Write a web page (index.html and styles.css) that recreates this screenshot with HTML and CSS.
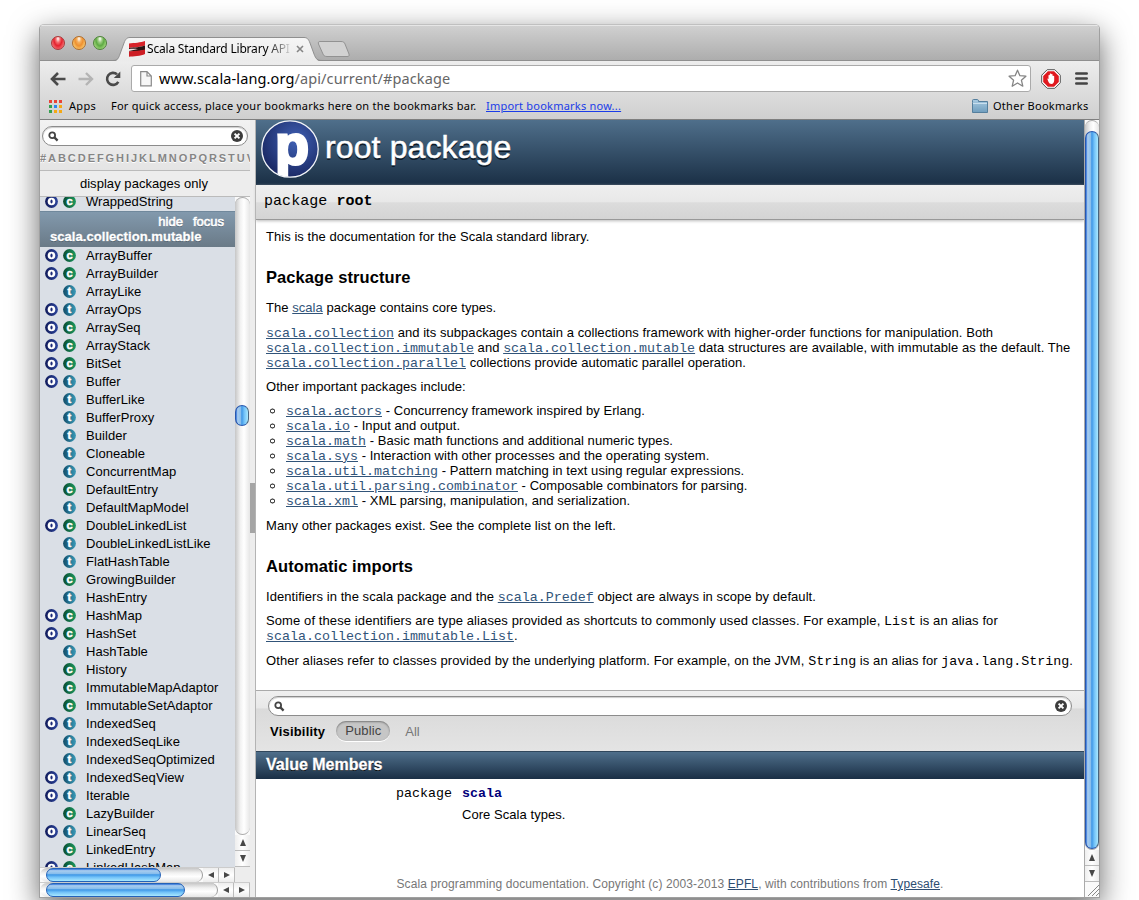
FILE: index.html
```html
<!DOCTYPE html>
<html lang="en">
<head>
<meta charset="utf-8">
<title>Scala Standard Library API</title>
<link rel="stylesheet" href="styles.css">
</head>
<body>
<svg class="defs" width="0" height="0">
  <defs>
    <linearGradient id="gBlue" x1="0" x2="1"><stop offset="0" stop-color="#101a5a"/><stop offset="1" stop-color="#2c459c"/></linearGradient>
    <linearGradient id="gGreen" x1="0" x2="1"><stop offset="0" stop-color="#0a4a30"/><stop offset="1" stop-color="#1c9a60"/></linearGradient>
    <linearGradient id="gTeal" x1="0" x2="1"><stop offset="0" stop-color="#124c68"/><stop offset="1" stop-color="#3a9ab8"/></linearGradient>
    <linearGradient id="gTab" x1="0" x2="0" y1="0" y2="1"><stop offset="0" stop-color="#f6f6f6"/><stop offset="1" stop-color="#ebebeb"/></linearGradient>
    <linearGradient id="gFolder" x1="0" x2="0" y1="0" y2="1"><stop offset="0" stop-color="#a9cbe2"/><stop offset="1" stop-color="#6f9dbd"/></linearGradient>
    <symbol id="o" viewBox="0 0 13 13"><circle cx="6.5" cy="6.5" r="6.4" fill="url(#gBlue)"/><circle cx="6.5" cy="6.5" r="3.8" fill="#fff"/><ellipse cx="6.5" cy="6.5" rx="1.1" ry="1.9" fill="#1c2a78"/></symbol>
    <symbol id="c" viewBox="0 0 13 13"><circle cx="6.5" cy="6.5" r="6.4" fill="url(#gGreen)"/><text x="6.6" y="9.800" class="glyph glyph-c">c</text></symbol>
    <symbol id="t" viewBox="0 0 13 13"><circle cx="6.5" cy="6.5" r="6.4" fill="url(#gTeal)"/><text x="6.4" y="10.2" class="glyph glyph-t">t</text></symbol>
    <symbol id="lens" viewBox="0 0 11 11"><circle cx="4.2" cy="4.2" r="2.9" fill="none" stroke="#444" stroke-width="1.8"/><path d="M6.4 6.4 9.6 9.6" stroke="#444" stroke-width="2.3"/></symbol>
    <symbol id="clear" viewBox="0 0 12 12"><circle cx="6" cy="6" r="6" fill="#3d3d3d"/><path d="M3.6 3.6 8.4 8.4M8.4 3.6 3.6 8.4" stroke="#fff" stroke-width="2"/></symbol>
  </defs>
</svg>
<div class="window">
  <div class="titlebar">
    <div class="lights"><i class="light red"></i><i class="light amber"></i><i class="light green"></i></div>
    <div class="tab">
      <svg class="tab-shape" width="210" height="25" viewBox="0 0 210 25"><path d="M0 24.5C5 24 5.500 21 7 17L11 6C12.500 2 14 .5 17 .5H191C194 .5 195.500 2 197 6L201 17C203 22 204 24 208 24.500Z" fill="url(#gTab)"/><path d="M0 23.500C5 23.500 5.500 21 7 17L11 6C12.500 2 14 .5 17 .5H191C194 .5 195.500 2 197 6L201 17C203 22 204 23.500 210 23.500" fill="none" stroke="#8f8f8f"/></svg>
      <svg class="favicon" width="16" height="16" viewBox="0 0 16 16"><path d="M0 2.500C5 2 12 1.500 16 0V4.500C12 6 4 6.500 0 7Z" fill="#d8232a"/><path d="M0 7C5 6.500 12 6 16 4.500V9C12 10 4 10.500 0 10.500Z" fill="#2b1514"/><path d="M0 10.500C5 10 12 9.500 16 8.500V13C12 15 4 15.300 0 15.800Z" fill="#cc1d24"/><path d="M0 8C3 7.600 7 7.800 9 8L0 10Z" fill="#f4e0e0"/></svg>
      <span class="tab-title">Scala Standard Library API</span>
      <svg class="tab-close" width="8" height="8" viewBox="0 0 8 8"><path d="M1 1 7 7M7 1 1 7" stroke="#858585" stroke-width="1.6"/></svg>
    </div>
    <svg class="newtab" width="34" height="17" viewBox="0 0 34 17"><path d="M3 .5H24C26.500 .5 27.500 1.500 28 3L32 13C32.500 15 32 15.500 30 15.500H10C7.500 15.500 6.500 14.500 6 13L1.500 3C1 1.200 1.500 .5 3 .5Z" fill="#d2d2d2" stroke="#929292"/></svg>
  </div>
  <div class="chrome">
    <div class="toolbar">
      <svg class="nav" width="16" height="14" viewBox="0 0 16 14"><path d="M8 1 2 7 8 13M2 7H15.500" fill="none" stroke="#4a4a4a" stroke-width="2.600"/></svg>
      <svg class="nav fwd" width="16" height="14" viewBox="0 0 16 14"><path d="M8 1 14 7 8 13M14 7H.5" fill="none" stroke="#b4b4b4" stroke-width="2.400"/></svg>
      <svg class="nav reload" width="16" height="16" viewBox="0 0 16 16"><path d="M12 3.300A6 6 0 1 0 13.300 10.800" fill="none" stroke="#4a4a4a" stroke-width="2.600"/><path d="M15.300 .5V7H8.800Z" fill="#4a4a4a"/></svg>
      <div class="omnibox">
        <svg width="12" height="16" viewBox="0 0 12 16"><path d="M.7 .7H7L11.300 5V14.800H.7ZM7 .7V5H11.300" fill="#f7f7f7" stroke="#8a8a8a" stroke-width="1.200"/></svg>
        <span class="url"><b>www.scala-lang.org</b>/api/current/#package</span>
        <svg width="19" height="19" viewBox="0 0 19 19"><path d="M9.500 1.200 11.900 6.700 17.900 7.200 13.400 11.200 14.800 17.200 9.500 14 4.200 17.200 5.600 11.200 1.100 7.200 7.100 6.700Z" fill="#fff" stroke="#858585" stroke-width="1.300" stroke-linejoin="round"/></svg>
      </div>
      <svg class="block" width="20" height="20" viewBox="0 0 20 20"><path d="M6.200 .7H13.800L19.300 6.200V13.800L13.800 19.300H6.200L.7 13.800V6.200Z" fill="#fff" stroke="#555"/><path d="M6.900 2.200H13.100L17.800 6.900V13.100L13.100 17.800H6.900L2.200 13.100V6.900Z" fill="#e0191f"/><path d="M6.200 9.500 7.500 10V6.300Q8.200 5.500 8.800 6.300V4.800Q9.600 4 10.200 4.800V5.300Q11.100 4.700 11.600 5.600V7Q12.500 6.200 13.200 7.200V11.500Q12.800 14.800 10.500 15Q8.200 14.800 7.500 13Z" fill="#fff"/></svg>
      <svg class="menu" width="13" height="13" viewBox="0 0 13 13"><path d="M1.300 1.500H11.700M1.300 6.500H11.700M1.300 11.500H11.700" stroke="#444" stroke-width="2.600" stroke-linecap="round"/></svg>
    </div>
    <div class="bookmarks">
      <svg class="apps" width="13" height="13" viewBox="0 0 13 13"><path d="M0 0h3v3H0zM5 0h3v3H5zM10 0h3v3h-3z" fill="#ea4335"/><path d="M0 5h3v3H0zM0 10h3v3H0z" fill="#34a04f"/><path d="M5 5h3v3H5z" fill="#2a86f0"/><path d="M10 5h3v3h-3zM5 10h3v3H5zM10 10h3v3h-3z" fill="#f4a814"/></svg>
      <span class="b-apps">Apps</span>
      <span class="b-hint">For quick access, place your bookmarks here on the bookmarks bar.</span>
      <a class="b-import">Import bookmarks now...</a>
      <svg class="folder" width="16" height="15" viewBox="0 0 16 15"><path d="M.5 3.500V1.500Q.5 .5 1.500 .5H5.500Q6.500 .5 6.500 2.500H15.500V13.500H.5Z" fill="url(#gFolder)" stroke="#557f9d"/><path d="M1 4.500H15" stroke="#c9dfee" /></svg>
      <span class="b-other">Other Bookmarks</span>
    </div>
  </div>
  <div class="page">
    <div class="side">
      <div class="side-filter">
        <div class="search"><svg width="11" height="11"><use href="#lens"/></svg><svg width="12" height="12"><use href="#clear"/></svg></div>
        <div class="letters">#ABCDEFGHIJKLMNOPQRSTUV</div>
      </div>
      <div class="only">display packages only</div>
      <div class="listrow">
        <div class="list">
          <div class="row first"><svg><use href="#o"/></svg><svg><use href="#c"/></svg>WrappedString</div>
          <div class="pkg"><div class="pkg-act"><span>hide</span><span>focus</span></div><div class="pkg-name">scala.collection.mutable</div></div>
          <div class="row"><svg><use href="#o"/></svg><svg><use href="#c"/></svg>ArrayBuffer</div>
          <div class="row"><svg><use href="#o"/></svg><svg><use href="#c"/></svg>ArrayBuilder</div>
          <div class="row"><svg></svg><svg><use href="#t"/></svg>ArrayLike</div>
          <div class="row"><svg><use href="#o"/></svg><svg><use href="#t"/></svg>ArrayOps</div>
          <div class="row"><svg><use href="#o"/></svg><svg><use href="#c"/></svg>ArraySeq</div>
          <div class="row"><svg><use href="#o"/></svg><svg><use href="#c"/></svg>ArrayStack</div>
          <div class="row"><svg><use href="#o"/></svg><svg><use href="#c"/></svg>BitSet</div>
          <div class="row"><svg><use href="#o"/></svg><svg><use href="#t"/></svg>Buffer</div>
          <div class="row"><svg></svg><svg><use href="#t"/></svg>BufferLike</div>
          <div class="row"><svg></svg><svg><use href="#t"/></svg>BufferProxy</div>
          <div class="row"><svg></svg><svg><use href="#t"/></svg>Builder</div>
          <div class="row"><svg></svg><svg><use href="#t"/></svg>Cloneable</div>
          <div class="row"><svg></svg><svg><use href="#t"/></svg>ConcurrentMap</div>
          <div class="row"><svg></svg><svg><use href="#c"/></svg>DefaultEntry</div>
          <div class="row"><svg></svg><svg><use href="#t"/></svg>DefaultMapModel</div>
          <div class="row"><svg><use href="#o"/></svg><svg><use href="#c"/></svg>DoubleLinkedList</div>
          <div class="row"><svg></svg><svg><use href="#t"/></svg>DoubleLinkedListLike</div>
          <div class="row"><svg></svg><svg><use href="#t"/></svg>FlatHashTable</div>
          <div class="row"><svg></svg><svg><use href="#c"/></svg>GrowingBuilder</div>
          <div class="row"><svg></svg><svg><use href="#t"/></svg>HashEntry</div>
          <div class="row"><svg><use href="#o"/></svg><svg><use href="#c"/></svg>HashMap</div>
          <div class="row"><svg><use href="#o"/></svg><svg><use href="#c"/></svg>HashSet</div>
          <div class="row"><svg></svg><svg><use href="#t"/></svg>HashTable</div>
          <div class="row"><svg></svg><svg><use href="#c"/></svg>History</div>
          <div class="row"><svg></svg><svg><use href="#c"/></svg>ImmutableMapAdaptor</div>
          <div class="row"><svg></svg><svg><use href="#c"/></svg>ImmutableSetAdaptor</div>
          <div class="row"><svg><use href="#o"/></svg><svg><use href="#t"/></svg>IndexedSeq</div>
          <div class="row"><svg></svg><svg><use href="#t"/></svg>IndexedSeqLike</div>
          <div class="row"><svg></svg><svg><use href="#t"/></svg>IndexedSeqOptimized</div>
          <div class="row"><svg><use href="#o"/></svg><svg><use href="#t"/></svg>IndexedSeqView</div>
          <div class="row"><svg><use href="#o"/></svg><svg><use href="#t"/></svg>Iterable</div>
          <div class="row"><svg></svg><svg><use href="#c"/></svg>LazyBuilder</div>
          <div class="row"><svg><use href="#o"/></svg><svg><use href="#t"/></svg>LinearSeq</div>
          <div class="row"><svg></svg><svg><use href="#c"/></svg>LinkedEntry</div>
          <div class="row"><svg><use href="#o"/></svg><svg><use href="#c"/></svg>LinkedHashMap</div>
        </div>
        <div class="vbar list-bar">
          <div class="vtrack"><div class="vthumb"></div></div>
          <div class="vbtn"><i class="up"></i></div><div class="vbtn"><i class="down"></i></div>
        </div>
      </div>
      <div class="hbar inner">
        <div class="htrack"><div class="hthumb"></div></div>
        <div class="hbtn"><i class="left"></i></div><div class="hbtn"><i class="right"></i></div>
      </div>
      <div class="hbar outer">
        <div class="htrack"><div class="hthumb"></div></div>
        <div class="hbtn"><i class="left"></i></div><div class="hbtn"><i class="right"></i></div>
      </div>
    </div>
    <div class="splitter"><div class="grip"></div></div>
    <div class="main">
      <div class="head">
        <svg width="60" height="60" viewBox="0 0 60 60"><defs><radialGradient id="gP" cx=".6" cy=".35" r=".65"><stop offset="0" stop-color="#3f60b4"/><stop offset="1" stop-color="#1b2a66"/></radialGradient><clipPath id="cp"><circle cx="30" cy="30" r="28"/></clipPath></defs><circle cx="30" cy="30" r="28.200" fill="url(#gP)" stroke="#f2f4f8" stroke-width="1.300"/><text class="p" x="32" y="45" clip-path="url(#cp)">p</text></svg>
        <h1>root package</h1>
      </div>
      <div class="sig">package <b>root</b></div>
      <div class="doc">
        <p>This is the documentation for the Scala standard library.</p>
        <h3>Package structure</h3>
        <p class="intro">The <a>scala</a> package contains core types.</p>
        <p><a><code>scala.collection</code></a> and its subpackages contain a collections framework with higher-order functions for manipulation. Both<br><a><code>scala.collection.immutable</code></a> and <a><code>scala.collection.mutable</code></a> data structures are available, with immutable as the default. The<br><a><code>scala.collection.parallel</code></a> collections provide automatic parallel operation.</p>
        <p>Other important packages include:</p>
        <ul>
          <li><a><code>scala.actors</code></a> - Concurrency framework inspired by Erlang.</li>
          <li><a><code>scala.io</code></a> - Input and output.</li>
          <li><a><code>scala.math</code></a> - Basic math functions and additional numeric types.</li>
          <li><a><code>scala.sys</code></a> - Interaction with other processes and the operating system.</li>
          <li><a><code>scala.util.matching</code></a> - Pattern matching in text using regular expressions.</li>
          <li><a><code>scala.util.parsing.combinator</code></a> - Composable combinators for parsing.</li>
          <li><a><code>scala.xml</code></a> - XML parsing, manipulation, and serialization.</li>
        </ul>
        <p>Many other packages exist. See the complete list on the left.</p>
        <h3 class="second">Automatic imports</h3>
        <p class="ident">Identifiers in the scala package and the <a><code>scala.Predef</code></a> object are always in scope by default.</p>
        <p class="alias">Some of these identifiers are type aliases provided as shortcuts to commonly used classes. For example, <code>List</code> is an alias for<br><a><code>scala.collection.immutable.List</code></a>.</p>
        <p class="last">Other aliases refer to classes provided by the underlying platform. For example, on the JVM, <code>String</code> is an alias for <code>java.lang.String</code>.</p>
      </div>
      <div class="mfilter">
        <div class="search"><svg width="11" height="11"><use href="#lens"/></svg><svg width="12" height="12"><use href="#clear"/></svg></div>
        <div class="vis"><b>Visibility</b><span class="pill">Public</span><span class="all">All</span></div>
      </div>
      <h3 class="vm">Value Members</h3>
      <div class="member"><code>package</code><code class="name">scala</code></div>
      <div class="desc">Core Scala types.</div>
      <div class="foot">Scala programming documentation. Copyright (c) 2003-2013 <a>EPFL</a>, with contributions from <a>Typesafe</a>.</div>
    </div>
    <div class="vbar main-bar">
      <div class="vtrack"><div class="vthumb"></div></div>
      <div class="vbtn"><i class="up"></i></div><div class="vbtn"><i class="down"></i></div>
      <svg class="resize" width="15" height="15" viewBox="0 0 15 15"><path d="M3 14 14 3M7 14 14 7M11 14 14 11" stroke="#888"/></svg>
    </div>
  </div>
</div>
</body>
</html>
```
FILE: styles.css
```css
* { box-sizing: border-box; }
html { height: 900px; overflow: hidden; }
body { margin: 0; padding: 24px 39px 0; height: 900px; overflow: hidden; background: #fff; font: 13px/15px "Liberation Sans", Arial, sans-serif; color: #000; }
.defs { position: absolute; }
svg { display: block; flex: none; }
h1, h3, p, ul { margin: 0; padding: 0; }
.glyph { font: bold 11px "Liberation Sans", sans-serif; fill: #fff; stroke: #fff; stroke-width: .5px; text-anchor: middle; }
.window { width: 1061px; height: 874px; border: 1px solid #a0a0a0; border-top-color: #c0c0c0; border-radius: 5px 5px 0 0; box-shadow: 0 10px 30px rgba(0,0,0,.6); background: #fff; overflow: hidden; }

/* Title bar */
.titlebar { height: 36px; display: flex; background: linear-gradient(#d0d0d0, #adadad); border-top: 1px solid #e6e6e6; border-bottom: 1px solid #8f8f8f; }
.lights { display: flex; gap: 7px; padding: 10px 0 0 11px; width: 73px; }
.light { width: 14px; height: 14px; border-radius: 50%; border: 1px solid; }
.red { border-color: #a8393a; background: radial-gradient(ellipse at 50% 15%, #fff 0, #f56f70 25%, #e4222e 48%, #ff9a9a 95%); }
.amber { border-color: #b06c2a; background: radial-gradient(ellipse at 50% 15%, #fff 0, #f5b060 25%, #ee9030 48%, #ffe890 95%); }
.green { border-color: #4d8238; background: radial-gradient(ellipse at 50% 15%, #fff 0, #9ccc80 25%, #5eaa43 48%, #c8f09a 95%); }
.tab { position: relative; width: 205px; height: 25px; margin-top: 11px; padding-left: 16px; display: flex; align-items: flex-start; font: 12px/16px "Noto Sans", sans-serif; }
.tab-shape { position: absolute; left: 0; top: 0; }
.favicon { position: relative; margin-top: 4px; }
.tab-title { position: relative; width: 145px; padding: 4px 0 0 2px; white-space: nowrap; letter-spacing: -.2px; -webkit-mask-image: linear-gradient(90deg, #000 84%, transparent 102%); mask-image: linear-gradient(90deg, #000 84%, transparent 102%); }
.tab-close { position: relative; margin: 8px 0 0 6px; }
.newtab { margin: 15px 0 0 -1px; }

/* Toolbar */
.chrome { height: 59px; background: linear-gradient(#ededed, #cfcfcf); border-bottom: 1px solid #7f7f7f; font-family: "Noto Sans", sans-serif; }
.toolbar { display: flex; align-items: center; height: 34px; padding: 1px 11px 0 10px; }
.fwd { margin-left: 12px; }
.reload { margin-left: 11px; }
.omnibox { display: flex; align-items: center; width: 901px; height: 27px; margin-left: 10px; padding: 0 3px 0 8px; background: #fff; border: 1px solid #aaa; border-radius: 3px; }
.url { flex: 1; margin-left: 7px; padding-bottom: 1px; font-size: 14.5px; line-height: 20px; color: #666; letter-spacing: .12px; }
.url b { font-weight: normal; color: #000; }
.block { margin-left: 10px; }
.menu { margin-left: 14px; }
.bookmarks { display: flex; align-items: center; height: 24px; padding: 0 11px 2px 9px; font-size: 11px; line-height: 16px; white-space: nowrap; }
.b-apps { margin-left: 7px; width: 42px; letter-spacing: .3px; }
.b-hint { width: 375px; letter-spacing: .25px; }
.b-import { color: #1a3ce8; text-decoration: underline; letter-spacing: .22px; }
.folder { margin-left: auto; }
.b-other { width: 95px; margin-left: 5px; letter-spacing: .27px; }

/* Sidebar */
.page { display: flex; height: 777px; }
.side { width: 210px; display: flex; flex-direction: column; background: #ededed; }
.side-filter { height: 51px; padding: 6px 2px 0; background: linear-gradient(#f2f2f2, #e4e4e4); border-bottom: 1px solid #bbb; overflow: hidden; }
.search { display: flex; align-items: center; justify-content: space-between; height: 20px; padding: 0 4px 0 5px; background: #fff; border: 1px solid #8c8c8c; border-radius: 10px; box-shadow: inset 0 1px 1px #ccc; }
.letters { margin: 5px -2px 0; font-weight: bold; font-size: 11px; line-height: 15px; letter-spacing: 1.95px; color: #858585; text-shadow: 0 1px #fff; white-space: nowrap; overflow: hidden; }
.only { height: 26px; line-height: 25px; padding-right: 2px; text-align: center; border-bottom: 1px solid #bbb; letter-spacing: .05px; }
.listrow { display: flex; height: 670px; }
.list { width: 195px; height: 670px; overflow: hidden; background: #dadfe6; }
.row { display: flex; align-items: center; height: 18px; padding: 0 0 1px 5px; gap: 5px; line-height: 17px; letter-spacing: .05px; }
.row svg { width: 13px; height: 13px; }
.row svg + svg { margin-right: 5px; }
.first { margin-top: -4px; }
.pkg { height: 36px; padding: 2px 11px 0 10px; background: linear-gradient(#8299ad, #6a7a87); border-top: 1px solid #70889c; color: #fff; font-weight: bold; text-shadow: 0 1px #4a5a68; }
.pkg-act { display: flex; justify-content: flex-end; gap: 10px; font-weight: normal; -webkit-text-stroke: .6px #fff; }
.pkg-name { letter-spacing: .05px; -webkit-text-stroke: .3px #fff; }
.splitter { width: 6px; padding-top: 363px; background: #ededed; border-right: 1px solid #b4b4b4; }
.grip { height: 50px; background: #a5a5a5; }

/* Scrollbars */
.vbar { display: flex; flex-direction: column; width: 15px; flex: none; background: #fafafa; }
.vtrack { background: linear-gradient(90deg, #c6c6c6, #f1f1f1 35%, #fff 60%, #e6e6e6); border-radius: 8px; border: solid #aaa; border-width: 1px 0; }
.list-bar .vtrack { height: 638px; padding-top: 207px; }
.vthumb { width: 14px; border: 1px solid #2857ae; border-right-color: #47657f; border-radius: 7px; background: linear-gradient(90deg, #2a6ed8, #aacdef 14%, #86bdec 40%, #3d96e6 48%, #71c1f8 68%, #a8e8ff); }
.list-bar .vthumb { height: 21px; }
.main-bar { border-left: 1px solid #aaa; }
.main-bar .vtrack { height: 730px; padding-top: 10px; }
.main-bar .vthumb { height: 718px; }
.vbtn { height: 16px; display: flex; align-items: center; justify-content: center; border-bottom: 1px solid #bbb; background: linear-gradient(90deg, #eee, #fff 50%, #ececec); }
.up, .down { border: solid transparent; border-width: 0 3.5px 7px; border-bottom-color: #484848; }
.down { border-width: 7px 3.5px 0; border-top-color: #484848; }
.hbar { display: flex; height: 15px; background: #fafafa; border-top: 1px solid #ccc; }
.inner { width: 195px; }
.htrack { width: 163px; padding-left: 6px; border-radius: 8px; background: linear-gradient(#c6c6c6, #f1f1f1 35%, #fff 60%, #e6e6e6); border-right: 1px solid #999; }
.outer .htrack { width: 178px; }
.hthumb { width: 115px; height: 14px; border: 1px solid #2462b8; border-radius: 7px; background: linear-gradient(#2a6ed8, #aacdef 14%, #86bdec 40%, #3d96e6 48%, #71c1f8 68%, #a8e8ff); }
.outer .hthumb { width: 139px; }
.hbtn { width: 16px; display: flex; align-items: center; justify-content: center; border-right: 1px solid #bbb; background: linear-gradient(#eee, #fff 50%, #ececec); }
.left, .right { border: solid transparent; border-width: 3.5px 6px 3.5px 0; border-right-color: #484848; }
.right { border-width: 3.5px 0 3.5px 6px; border-left-color: #484848; }

/* Documentation */
.main { width: 828px; }
.head { display: flex; height: 65px; padding: 0 0 0 4px; background: linear-gradient(#4f6f8b, #1a2f45); }
.head svg { margin-top: -1px; }
.p { font: bold 55px "Liberation Sans", sans-serif; fill: #fff; stroke: #fff; stroke-width: 3px; text-anchor: middle; }
h1 { margin: 8px 0 0 5px; font-weight: normal; font-size: 32px; line-height: 38px; letter-spacing: .12px; color: #fff; text-shadow: 0 2px #0c1a28; -webkit-text-stroke: .5px #fff; }
.sig { height: 35px; padding: 8px; font: 15px/18px "Liberation Mono", "Courier New", monospace; letter-spacing: .05px; background: linear-gradient(#efefef, #e8e8e8 50%, #dcdcdc 52%, #d4d4d4); border-bottom: 1px solid #999; box-shadow: 0 1px 3px #bbb; }
.doc { height: 470px; padding: 9px 0 0 10px; white-space: nowrap; letter-spacing: .05px; }
.doc p { margin-bottom: 9px; }
.doc h3 { margin: 26px 0 15px; font-size: 16.5px; line-height: 15px; letter-spacing: .08px; }
.doc p.intro { margin-bottom: 10px; }
.doc a { color: #315479; text-decoration: underline; }
code { font: 13.33px "Liberation Mono", monospace; line-height: 0; letter-spacing: 0; }
.doc ul { margin-bottom: 10px; list-style: none; }
.doc li { padding-left: 20px; background: radial-gradient(circle at 6.5px 8px, transparent 1.2px, #444 1.6px, #444 2.3px, transparent 2.8px); }
.ident { letter-spacing: .065px; }
.alias { letter-spacing: .1px; }
.doc p.last { margin-top: 10px; letter-spacing: .08px; }
.mfilter { height: 61px; padding: 5px 12px 0; border-top: 1px solid #aaa; background: linear-gradient(#efefef, #e8e8e8 28%, #dadada 30%, #e4e4e4); }
.vis { display: flex; align-items: center; padding: 5px 0 0 2px; }
.vis b { letter-spacing: .2px; }
.pill { margin: 0 15px 0 11px; padding: 2px 9px 3px; border-radius: 10px; background: #c6c6c6; box-shadow: inset 0 1px 2px #777, 0 1px #fff; color: #444; letter-spacing: .1px; }
.all { color: #777; }
.vm { height: 28px; padding-left: 10px; font-size: 16px; line-height: 25px; color: #fff; background: linear-gradient(#4f6f8b, #1a2f45); border-top: 1px solid #30475c; text-shadow: 0 1px #000; -webkit-text-stroke: .3px #fff; }
.member { display: flex; gap: 10px; padding: 7px 0 0 140px; }
.member code { line-height: 15px; }
.member .name { color: #00007a; font-weight: bold; }
.desc { margin: 6px 0 0 206px; letter-spacing: .05px; }
.foot { margin-top: 55px; text-align: center; font-size: 12px; letter-spacing: .1px; color: #777; }
.foot a { color: #2d4d70; text-decoration: underline; }
```
